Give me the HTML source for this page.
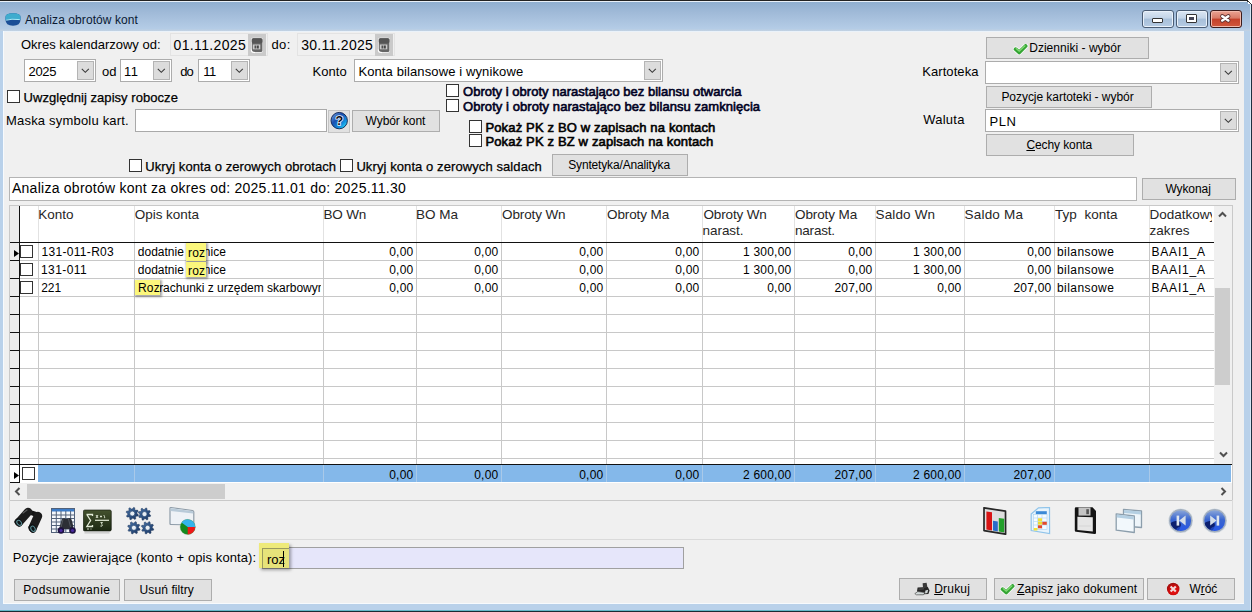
<!DOCTYPE html>
<html><head><meta charset="utf-8"><style>
*{box-sizing:border-box;margin:0;padding:0}
html,body{width:1252px;height:612px;overflow:hidden}
body{position:relative;background:#b9d1ea;font-family:"Liberation Sans",sans-serif;font-size:13px;color:#000}
.a{position:absolute}
.t{position:absolute;white-space:nowrap}
.btn{position:absolute;background:#e1e1e1;border:1px solid #adadad}
.combo{position:absolute;background:#fff;border:1px solid #acacac}
.dd{position:absolute;background:#dcdcdc;border:1px solid #b4b4b4}

.cb{position:absolute;width:13px;height:13px;border:1px solid #333;background:#fff}
.tb{position:absolute;width:32px;height:18px;border:1px solid #3c4f66;border-radius:3px}
.gl{position:absolute;background:#c8c8c8}
.hl{background:#f5f07a;box-shadow:2px 2px 2px rgba(0,0,0,0.3)}</style></head><body>
<div class="a" style="left:0px;top:0px;width:1252px;height:31px;background:linear-gradient(#8cadcf 0%,#a0bad8 40%,#b4cce6 92%,#c2d2e2 100%)"></div>
<div class="a" style="left:0px;top:0px;width:1252px;height:1px;background:#222"></div>
<div class="a" style="left:0px;top:1px;width:1250px;height:1px;background:#e8f0f8"></div>
<div class="a" style="left:1251px;top:0px;width:1px;height:612px;background:#222"></div>
<div class="a" style="left:0px;top:611px;width:1252px;height:1px;background:#1a2a33"></div>
<div class="a" style="left:0px;top:610px;width:1251px;height:1px;background:#62b7c8"></div>
<div class="a" style="left:1248px;top:0px;width:4px;height:4px;background:#fff"></div>
<div class="a" style="left:1247px;top:1px;width:1px;height:1px;background:#333"></div>
<div class="a" style="left:1248px;top:1px;width:1px;height:1px;background:#333"></div>
<div class="a" style="left:1249px;top:2px;width:1px;height:1px;background:#333"></div>
<div class="a" style="left:1250px;top:3px;width:1px;height:1px;background:#333"></div>
<div class="a" style="left:1251px;top:4px;width:1px;height:608px;background:#1f3040"></div>
<div class="a" style="left:1250px;top:4px;width:1px;height:606px;background:#d6e6f4"></div>
<div class="a" style="left:3px;top:31px;width:1241px;height:573px;background:#f0f0f0"></div>
<div class="a" style="left:3px;top:31px;width:1241px;height:1px;background:#eaf2fa"></div>
<div class="a" style="left:3px;top:31px;width:1px;height:573px;background:#f7fafd"></div>
<div class="a" style="left:3px;top:603px;width:1241px;height:1px;background:#f7fafd"></div>
<svg class="a" style="left:5px;top:13px" width="16" height="13" viewBox="0 0 16 13"><path d="M0.5 4 Q0.5 0.3 8 0.3 Q15.5 0.3 15.5 4 L15.5 6.5 Q15.5 12.7 8 12.7 Q0.5 12.7 0.5 6.5Z" fill="#1a4e97"/><path d="M0.5 4 Q0.5 0.3 8 0.3 Q15.5 0.3 15.5 4 L15.5 6.8 Q8 5.2 0.5 7.2Z" fill="#3facce"/><path d="M1.2 7.2 Q6 5.6 14.8 6.6" stroke="#a8ecf8" stroke-width="1" fill="none"/></svg>
<div class="t" id="T_title" style="left:25.00px;top:14px;font-size:12px;line-height:12px;letter-spacing:0.079px;color:#0a1a33;">Analiza obrotów kont</div>
<div class="a" style="left:1142px;top:10px;width:32px;height:18px;border:1px solid #4a5c74;border-radius:3px;background:linear-gradient(#dbe6f3 0%,#c3d4e8 45%,#a7bfd9 50%,#b6cce4 100%);box-shadow:inset 0 0 0 1px #e9f1fa"></div>
<div class="a" style="left:1176px;top:10px;width:32px;height:18px;border:1px solid #4a5c74;border-radius:3px;background:linear-gradient(#dbe6f3 0%,#c3d4e8 45%,#a7bfd9 50%,#b6cce4 100%);box-shadow:inset 0 0 0 1px #e9f1fa"></div>
<div class="a" style="left:1210px;top:10px;width:32px;height:18px;border:1px solid #3c1c1c;border-radius:3px;background:linear-gradient(#eaa393 0%,#d87a66 45%,#c4412a 50%,#d0573c 100%);box-shadow:inset 0 0 0 1px #f1b9ab"></div>
<div class="a" style="left:1152px;top:18px;width:11px;height:5px;background:#fff;border:1px solid #333;border-radius:1px"></div>
<div class="a" style="left:1186px;top:14px;width:11px;height:9px;background:#fff;border:1px solid #333;border-radius:1px"></div>
<div class="a" style="left:1189px;top:17px;width:5px;height:3px;background:#445;"></div>
<svg class="a" style="left:1218px;top:12px" width="16" height="14" viewBox="0 0 16 14"><path d="M4.3 4.3 L10.3 8.5 M10.3 4.3 L4.3 8.5" stroke="#5a3030" stroke-width="4.2" stroke-linecap="round"/><path d="M4.3 4.3 L10.3 8.5 M10.3 4.3 L4.3 8.5" stroke="#fff" stroke-width="2.6" stroke-linecap="round"/></svg>
<div class="t" id="T_okres" style="left:21.00px;top:38px;font-size:13px;line-height:13px;letter-spacing:0.005px;">Okres kalendarzowy od:</div>
<div class="a" style="left:170px;top:33px;width:98px;height:23px;background:#f0f0f0;border:1px solid #e3e3e3"></div>
<div class="t" id="T_date1" style="left:173.60px;top:38px;font-size:14px;line-height:14px;letter-spacing:0.352px;">01.11.2025</div>
<div class="a" style="left:248px;top:34px;width:18px;height:22px;background:#cacaca"></div>
<div class="t" id="T_doc" style="left:271.60px;top:38px;font-size:13px;line-height:13px;letter-spacing:0.300px;">do:</div>
<div class="a" style="left:297px;top:33px;width:98px;height:23px;background:#f0f0f0;border:1px solid #e3e3e3"></div>
<div class="t" id="T_date2" style="left:301.20px;top:38px;font-size:14px;line-height:14px;letter-spacing:0.293px;">30.11.2025</div>
<div class="a" style="left:375px;top:34px;width:18px;height:22px;background:#cacaca"></div>
<svg class="a" style="left:250px;top:37px" width="15" height="17" viewBox="0 0 15 17"><rect x="1" y="0.8" width="12" height="15" rx="2" fill="#f4f4f4"/><rect x="1.8" y="1.2" width="10.6" height="13.8" rx="1.5" fill="#666"/><rect x="1.8" y="1.2" width="10.6" height="5" rx="1.5" fill="#555"/><rect x="2.8" y="7.5" width="7.5" height="4.8" fill="#cacaca"/><rect x="4.6" y="8.5" width="1.2" height="3" fill="#333"/><rect x="6.6" y="8.5" width="2.2" height="3" fill="#444"/><path d="M1.2 12.5 Q1.5 15.5 5 15.6" stroke="#fff" stroke-width="1.2" fill="none"/></svg>
<svg class="a" style="left:377px;top:37px" width="15" height="17" viewBox="0 0 15 17"><rect x="1" y="0.8" width="12" height="15" rx="2" fill="#f4f4f4"/><rect x="1.8" y="1.2" width="10.6" height="13.8" rx="1.5" fill="#666"/><rect x="1.8" y="1.2" width="10.6" height="5" rx="1.5" fill="#555"/><rect x="2.8" y="7.5" width="7.5" height="4.8" fill="#cacaca"/><rect x="4.6" y="8.5" width="1.2" height="3" fill="#333"/><rect x="6.6" y="8.5" width="2.2" height="3" fill="#444"/><path d="M1.2 12.5 Q1.5 15.5 5 15.6" stroke="#fff" stroke-width="1.2" fill="none"/></svg>
<div class="combo" style="left:24px;top:59px;width:72px;height:23px;">
<div class="dd" style="left:52px;top:1px;width:17px;height:19px"><svg class="a" style="left:3px;top:6px" width="9" height="6"><path d="M0.8 0.8 L4.3 4.3 L7.8 0.8" stroke="#3a3a3a" stroke-width="1.1" fill="none"/></svg></div>
</div>
<div class="t" id="T_2025" style="left:28.50px;top:65px;font-size:13px;line-height:13px;letter-spacing:-0.333px;">2025</div>
<div class="t" id="T_od" style="left:102.00px;top:65px;font-size:13px;line-height:13px;">od</div>
<div class="combo" style="left:120px;top:59px;width:52px;height:23px;">
<div class="dd" style="left:32px;top:1px;width:17px;height:19px"><svg class="a" style="left:3px;top:6px" width="9" height="6"><path d="M0.8 0.8 L4.3 4.3 L7.8 0.8" stroke="#3a3a3a" stroke-width="1.1" fill="none"/></svg></div>
</div>
<div class="t" id="T_11a" style="left:124.00px;top:65px;font-size:13px;line-height:13px;letter-spacing:0.500px;">11</div>
<div class="t" id="T_do" style="left:180.20px;top:65px;font-size:13px;line-height:13px;letter-spacing:-1.000px;">do</div>
<div class="combo" style="left:198px;top:59px;width:52px;height:23px;">
<div class="dd" style="left:32px;top:1px;width:17px;height:19px"><svg class="a" style="left:3px;top:6px" width="9" height="6"><path d="M0.8 0.8 L4.3 4.3 L7.8 0.8" stroke="#3a3a3a" stroke-width="1.1" fill="none"/></svg></div>
</div>
<div class="t" id="T_11b" style="left:203.20px;top:65px;font-size:13px;line-height:13px;letter-spacing:-0.500px;">11</div>
<div class="t" id="T_konto" style="left:312.40px;top:65px;font-size:13px;line-height:13px;letter-spacing:0.100px;">Konto</div>
<div class="combo" style="left:354px;top:59px;width:309px;height:23px;">
<div class="dd" style="left:289px;top:1px;width:17px;height:19px"><svg class="a" style="left:3px;top:6px" width="9" height="6"><path d="M0.8 0.8 L4.3 4.3 L7.8 0.8" stroke="#3a3a3a" stroke-width="1.1" fill="none"/></svg></div>
</div>
<div class="t" id="T_kontabil" style="left:358.40px;top:65px;font-size:13px;line-height:13px;letter-spacing:0.116px;">Konta bilansowe i wynikowe</div>
<div class="cb" style="left:7px;top:90px"></div>
<div class="t" id="T_uwzgl" style="left:23.50px;top:91px;font-size:13px;line-height:13px;letter-spacing:0.050px;-webkit-text-stroke:0.25px #000;">Uwzględnij zapisy robocze</div>
<div class="t" id="T_maska" style="left:6.00px;top:114px;font-size:13px;line-height:13px;letter-spacing:0.194px;">Maska symbolu kart.</div>
<div class="a" style="left:135px;top:109px;width:192px;height:23px;background:#fff;border:1px solid #a9a9a9"></div>
<div class="a" style="left:328px;top:110px;width:22px;height:23px;background:#e1e1e1;border:1px solid #c4c4c4"></div>
<svg class="a" style="left:330px;top:111px" width="19" height="19" viewBox="0 0 19 19"><defs><linearGradient id="hg" x1="0.1" y1="0.1" x2="0.9" y2="0.9"><stop offset="0" stop-color="#6a9ad8"/><stop offset="0.35" stop-color="#1a4fb0"/><stop offset="0.75" stop-color="#1290e0"/><stop offset="1" stop-color="#30e0f8"/></linearGradient></defs><circle cx="9.2" cy="9.6" r="8.2" fill="url(#hg)" stroke="#0a1e50" stroke-width="0.9"/><text x="9.4" y="14" font-family="Liberation Sans" font-weight="bold" font-size="12.5" text-anchor="middle" fill="#0a0a14" stroke="#e8f0ff" stroke-width="1.6" paint-order="stroke">?</text></svg>
<div class="btn" style="left:352px;top:110px;width:88px;height:22px;">
</div>
<div class="t" id="T_wybor" style="left:365.60px;top:115px;font-size:12px;line-height:12px;letter-spacing:-0.093px;">Wybór kont</div>
<div class="cb" style="left:446px;top:84px"></div>
<div class="t" id="T_obroty1" style="left:463.00px;top:85px;font-size:13px;line-height:13px;letter-spacing:0.021px;-webkit-text-stroke:0.6px #000022;color:#000022;">Obroty i obroty narastająco bez bilansu otwarcia</div>
<div class="cb" style="left:446px;top:99px"></div>
<div class="t" id="T_obroty2" style="left:463.00px;top:100px;font-size:13px;line-height:13px;letter-spacing:0.061px;-webkit-text-stroke:0.6px #000022;color:#000022;">Obroty i obroty narastająco bez bilansu zamknięcia</div>
<div class="cb" style="left:469px;top:120px"></div>
<div class="t" id="T_pokaz1" style="left:485.40px;top:121px;font-size:13px;line-height:13px;letter-spacing:0.154px;-webkit-text-stroke:0.6px #000;">Pokaż PK z BO w zapisach na kontach</div>
<div class="cb" style="left:469px;top:134px"></div>
<div class="t" id="T_pokaz2" style="left:485.40px;top:135px;font-size:13px;line-height:13px;letter-spacing:0.154px;-webkit-text-stroke:0.6px #000;">Pokaż PK z BZ w zapisach na kontach</div>
<div class="btn" style="left:986px;top:37px;width:163px;height:22px;">
</div>
<svg class="a" style="left:1013px;top:44px" width="16" height="12" viewBox="0 0 16 12"><path d="M2.6 5.2 L6.2 8.4 L12.6 2" stroke="#fff" stroke-width="5.4" fill="none" stroke-linejoin="round" stroke-linecap="round" opacity="0.75"/><path d="M2.6 5.2 L6.2 8.4 L12.6 2" stroke="#34a534" stroke-width="3.8" fill="none" stroke-linejoin="round" stroke-linecap="round"/><path d="M3.2 4.6 L6.2 7.2 L12 1.8" stroke="#8ee27e" stroke-width="1.2" fill="none" stroke-linecap="round" opacity="0.9"/></svg>
<div class="t" id="T_dzien" style="left:1029.20px;top:42px;font-size:12px;line-height:12px;letter-spacing:0.029px;">Dzienniki - wybór</div>
<div class="t" id="T_kartoteka" style="left:922.20px;top:65px;font-size:13px;line-height:13px;letter-spacing:0.077px;">Kartoteka</div>
<div class="combo" style="left:985px;top:61px;width:254px;height:23px;">
<div class="dd" style="left:234px;top:1px;width:17px;height:19px"><svg class="a" style="left:3px;top:6px" width="9" height="6"><path d="M0.8 0.8 L4.3 4.3 L7.8 0.8" stroke="#3a3a3a" stroke-width="1.1" fill="none"/></svg></div>
</div>
<div class="btn" style="left:986px;top:86px;width:166px;height:22px;">
</div>
<div class="t" id="T_pozycje" style="left:1001.40px;top:91px;font-size:12px;line-height:12px;letter-spacing:-0.047px;">Pozycje kartoteki - wybór</div>
<div class="t" id="T_waluta" style="left:923.20px;top:113px;font-size:13px;line-height:13px;letter-spacing:0.260px;">Waluta</div>
<div class="combo" style="left:985px;top:109px;width:254px;height:23px;">
<div class="dd" style="left:234px;top:1px;width:17px;height:19px"><svg class="a" style="left:3px;top:6px" width="9" height="6"><path d="M0.8 0.8 L4.3 4.3 L7.8 0.8" stroke="#3a3a3a" stroke-width="1.1" fill="none"/></svg></div>
</div>
<div class="t" id="T_pln" style="left:989.40px;top:115px;font-size:13px;line-height:13px;letter-spacing:0.650px;">PLN</div>
<div class="btn" style="left:986px;top:134px;width:148px;height:22px;">
</div>
<div class="t" id="T_cechy" style="left:1026.40px;top:139px;font-size:12px;line-height:12px;letter-spacing:-0.090px;"><u>C</u>echy konta</div>
<div class="cb" style="left:129px;top:159px"></div>
<div class="t" id="T_ukryj1" style="left:145.20px;top:160px;font-size:13px;line-height:13px;letter-spacing:0.076px;-webkit-text-stroke:0.25px #000;">Ukryj konta o zerowych obrotach</div>
<div class="cb" style="left:340px;top:159px"></div>
<div class="t" id="T_ukryj2" style="left:356.40px;top:160px;font-size:13px;line-height:13px;letter-spacing:0.090px;-webkit-text-stroke:0.25px #000;">Ukryj konta o zerowych saldach</div>
<div class="btn" style="left:552px;top:154px;width:136px;height:22px;">
</div>
<div class="t" id="T_synt" style="left:568.20px;top:159px;font-size:12px;line-height:12px;letter-spacing:-0.155px;">Syntetyka/Analityka</div>
<div class="a" style="left:9px;top:177px;width:1128px;height:24px;background:#fff;border:1px solid #b4b4b4"></div>
<div class="t" id="T_analiza" style="left:12.00px;top:181px;font-size:14px;line-height:14px;letter-spacing:0.250px;">Analiza obrotów kont za okres od: 2025.11.01 do: 2025.11.30</div>
<div class="btn" style="left:1142px;top:178px;width:94px;height:22px;">
</div>
<div class="t" id="T_wykonaj" style="left:1165.40px;top:183px;font-size:12px;line-height:12px;letter-spacing:-0.081px;">Wykonaj</div>
<div class="a" style="left:9px;top:205px;width:1224px;height:296px;background:#fff;border:1px solid #c9c9c9"></div>
<div class="a" style="left:10px;top:206px;width:9px;height:258px;background:#ececec"></div>
<div class="a" style="left:38px;top:206px;width:1px;height:36px;background:#e2e2e2"></div>
<div class="a" style="left:134px;top:206px;width:1px;height:36px;background:#e2e2e2"></div>
<div class="a" style="left:323px;top:206px;width:1px;height:36px;background:#e2e2e2"></div>
<div class="a" style="left:416px;top:206px;width:1px;height:36px;background:#e2e2e2"></div>
<div class="a" style="left:501px;top:206px;width:1px;height:36px;background:#e2e2e2"></div>
<div class="a" style="left:606px;top:206px;width:1px;height:36px;background:#e2e2e2"></div>
<div class="a" style="left:702px;top:206px;width:1px;height:36px;background:#e2e2e2"></div>
<div class="a" style="left:794px;top:206px;width:1px;height:36px;background:#e2e2e2"></div>
<div class="a" style="left:875px;top:206px;width:1px;height:36px;background:#e2e2e2"></div>
<div class="a" style="left:964px;top:206px;width:1px;height:36px;background:#e2e2e2"></div>
<div class="a" style="left:1054px;top:206px;width:1px;height:36px;background:#e2e2e2"></div>
<div class="a" style="left:1149px;top:206px;width:1px;height:36px;background:#e2e2e2"></div>
<div class="a" style="left:10px;top:242px;width:1204px;height:1px;background:#111"></div>
<div class="a" style="left:20px;top:260px;width:1194px;height:1px;background:#c8c8c8"></div>
<div class="a" style="left:10px;top:260px;width:10px;height:1px;background:#111"></div>
<div class="a" style="left:20px;top:278px;width:1194px;height:1px;background:#c8c8c8"></div>
<div class="a" style="left:10px;top:278px;width:10px;height:1px;background:#111"></div>
<div class="a" style="left:20px;top:296px;width:1194px;height:1px;background:#c8c8c8"></div>
<div class="a" style="left:10px;top:296px;width:10px;height:1px;background:#111"></div>
<div class="a" style="left:20px;top:314px;width:1194px;height:1px;background:#c8c8c8"></div>
<div class="a" style="left:10px;top:314px;width:10px;height:1px;background:#111"></div>
<div class="a" style="left:20px;top:332px;width:1194px;height:1px;background:#c8c8c8"></div>
<div class="a" style="left:10px;top:332px;width:10px;height:1px;background:#111"></div>
<div class="a" style="left:20px;top:350px;width:1194px;height:1px;background:#c8c8c8"></div>
<div class="a" style="left:10px;top:350px;width:10px;height:1px;background:#111"></div>
<div class="a" style="left:20px;top:368px;width:1194px;height:1px;background:#c8c8c8"></div>
<div class="a" style="left:10px;top:368px;width:10px;height:1px;background:#111"></div>
<div class="a" style="left:20px;top:386px;width:1194px;height:1px;background:#c8c8c8"></div>
<div class="a" style="left:10px;top:386px;width:10px;height:1px;background:#111"></div>
<div class="a" style="left:20px;top:404px;width:1194px;height:1px;background:#c8c8c8"></div>
<div class="a" style="left:10px;top:404px;width:10px;height:1px;background:#111"></div>
<div class="a" style="left:20px;top:422px;width:1194px;height:1px;background:#c8c8c8"></div>
<div class="a" style="left:10px;top:422px;width:10px;height:1px;background:#111"></div>
<div class="a" style="left:20px;top:440px;width:1194px;height:1px;background:#c8c8c8"></div>
<div class="a" style="left:10px;top:440px;width:10px;height:1px;background:#111"></div>
<div class="a" style="left:20px;top:458px;width:1194px;height:1px;background:#c8c8c8"></div>
<div class="a" style="left:10px;top:458px;width:10px;height:1px;background:#111"></div>
<div class="a" style="left:38px;top:243px;width:1px;height:221px;background:#c8c8c8"></div>
<div class="a" style="left:134px;top:243px;width:1px;height:221px;background:#c8c8c8"></div>
<div class="a" style="left:323px;top:243px;width:1px;height:221px;background:#c8c8c8"></div>
<div class="a" style="left:416px;top:243px;width:1px;height:221px;background:#c8c8c8"></div>
<div class="a" style="left:501px;top:243px;width:1px;height:221px;background:#c8c8c8"></div>
<div class="a" style="left:606px;top:243px;width:1px;height:221px;background:#c8c8c8"></div>
<div class="a" style="left:702px;top:243px;width:1px;height:221px;background:#c8c8c8"></div>
<div class="a" style="left:794px;top:243px;width:1px;height:221px;background:#c8c8c8"></div>
<div class="a" style="left:875px;top:243px;width:1px;height:221px;background:#c8c8c8"></div>
<div class="a" style="left:964px;top:243px;width:1px;height:221px;background:#c8c8c8"></div>
<div class="a" style="left:1054px;top:243px;width:1px;height:221px;background:#c8c8c8"></div>
<div class="a" style="left:1149px;top:243px;width:1px;height:221px;background:#c8c8c8"></div>
<div class="a" style="left:19px;top:206px;width:1px;height:277px;background:#111"></div>
<div class="t" id="T_h_konto" style="left:38.20px;top:208px;font-size:13.5px;line-height:13.5px;letter-spacing:0.025px;color:#262626;">Konto</div>
<div class="t" id="T_h_opis" style="left:134.80px;top:208px;font-size:13.5px;line-height:13.5px;letter-spacing:-0.037px;color:#262626;">Opis konta</div>
<div class="t" id="T_h_bown" style="left:323.50px;top:208px;font-size:13.5px;line-height:13.5px;letter-spacing:-0.197px;color:#262626;">BO Wn</div>
<div class="t" id="T_h_boma" style="left:416.00px;top:208px;font-size:13.5px;line-height:13.5px;color:#262626;">BO Ma</div>
<div class="t" id="T_h_obwn" style="left:502.00px;top:208px;font-size:13.5px;line-height:13.5px;letter-spacing:-0.125px;color:#262626;">Obroty Wn</div>
<div class="t" id="T_h_obma" style="left:607.00px;top:208px;font-size:13.5px;line-height:13.5px;letter-spacing:-0.099px;color:#262626;">Obroty Ma</div>
<div class="t" id="T_h_obwn2" style="left:703.50px;top:208px;font-size:13.5px;line-height:13.5px;letter-spacing:-0.151px;color:#262626;">Obroty Wn</div>
<div class="t" id="T_h_obma2" style="left:795.00px;top:208px;font-size:13.5px;line-height:13.5px;letter-spacing:-0.099px;color:#262626;">Obroty Ma</div>
<div class="t" id="T_h_sawn" style="left:875.50px;top:208px;font-size:13.5px;line-height:13.5px;letter-spacing:0.147px;color:#262626;">Saldo Wn</div>
<div class="t" id="T_h_sama" style="left:964.40px;top:208px;font-size:13.5px;line-height:13.5px;letter-spacing:0.241px;color:#262626;">Saldo Ma</div>
<div class="t" id="T_h_typ" style="left:1055.00px;top:208px;font-size:13.5px;line-height:13.5px;letter-spacing:0.037px;color:#262626;">Typ&nbsp; konta</div>
<div class="t" id="T_h_dod" style="left:1149.40px;top:208px;font-size:13.5px;line-height:13.5px;color:#262626;overflow:hidden;width:63px;">Dodatkowy</div>
<div class="t" id="T_h_nar1" style="left:702.50px;top:224px;font-size:13.5px;line-height:13.5px;letter-spacing:-0.043px;color:#262626;">narast.</div>
<div class="t" id="T_h_nar2" style="left:795.00px;top:224px;font-size:13.5px;line-height:13.5px;letter-spacing:-0.209px;color:#262626;">narast.</div>
<div class="t" id="T_h_zak" style="left:1149.40px;top:224px;font-size:13.5px;line-height:13.5px;letter-spacing:0.080px;color:#262626;">zakres</div>
<div class="cb" style="left:20px;top:245px"></div>
<div class="t" id="T_g0_0" style="left:41.60px;top:246px;font-size:12px;line-height:12px;letter-spacing:0.300px;width:90.9px;height:15px;overflow:hidden;">131-011-R03</div>
<div class="t" id="T_g0_1" style="left:137.80px;top:246px;font-size:12px;line-height:12px;letter-spacing:-0.003px;width:184.2px;height:15px;overflow:hidden;">dodatnie roznice</div>
<div class="t" style="left:324px;top:246px;width:89.4px;text-align:right;font-size:12px;line-height:12px;letter-spacing:0.2px">0,00</div>
<div class="t" style="left:417px;top:246px;width:81.4px;text-align:right;font-size:12px;line-height:12px;letter-spacing:0.2px">0,00</div>
<div class="t" style="left:502px;top:246px;width:101.4px;text-align:right;font-size:12px;line-height:12px;letter-spacing:0.2px">0,00</div>
<div class="t" style="left:607px;top:246px;width:92.4px;text-align:right;font-size:12px;line-height:12px;letter-spacing:0.2px">0,00</div>
<div class="t" style="left:703px;top:246px;width:88.4px;text-align:right;font-size:12px;line-height:12px;letter-spacing:0.2px">1 300,00</div>
<div class="t" style="left:795px;top:246px;width:77.4px;text-align:right;font-size:12px;line-height:12px;letter-spacing:0.2px">0,00</div>
<div class="t" style="left:876px;top:246px;width:85.4px;text-align:right;font-size:12px;line-height:12px;letter-spacing:0.2px">1 300,00</div>
<div class="t" style="left:965px;top:246px;width:86.4px;text-align:right;font-size:12px;line-height:12px;letter-spacing:0.2px">0,00</div>
<div class="t" id="T_g0_10" style="left:1057.00px;top:246px;font-size:12px;line-height:12px;letter-spacing:0.430px;width:90.0px;height:15px;overflow:hidden;">bilansowe</div>
<div class="t" id="T_g0_11" style="left:1151.40px;top:246px;font-size:12px;line-height:12px;letter-spacing:0.833px;width:60.6px;height:15px;overflow:hidden;">BAAI1_A</div>
<div class="cb" style="left:20px;top:263px"></div>
<div class="t" id="T_g1_0" style="left:41.00px;top:264px;font-size:12px;line-height:12px;letter-spacing:0.415px;width:91.0px;height:15px;overflow:hidden;">131-011</div>
<div class="t" id="T_g1_1" style="left:137.80px;top:264px;font-size:12px;line-height:12px;letter-spacing:-0.003px;width:184.2px;height:15px;overflow:hidden;">dodatnie roznice</div>
<div class="t" style="left:324px;top:264px;width:89.4px;text-align:right;font-size:12px;line-height:12px;letter-spacing:0.2px">0,00</div>
<div class="t" style="left:417px;top:264px;width:81.4px;text-align:right;font-size:12px;line-height:12px;letter-spacing:0.2px">0,00</div>
<div class="t" style="left:502px;top:264px;width:101.4px;text-align:right;font-size:12px;line-height:12px;letter-spacing:0.2px">0,00</div>
<div class="t" style="left:607px;top:264px;width:92.4px;text-align:right;font-size:12px;line-height:12px;letter-spacing:0.2px">0,00</div>
<div class="t" style="left:703px;top:264px;width:88.4px;text-align:right;font-size:12px;line-height:12px;letter-spacing:0.2px">1 300,00</div>
<div class="t" style="left:795px;top:264px;width:77.4px;text-align:right;font-size:12px;line-height:12px;letter-spacing:0.2px">0,00</div>
<div class="t" style="left:876px;top:264px;width:85.4px;text-align:right;font-size:12px;line-height:12px;letter-spacing:0.2px">1 300,00</div>
<div class="t" style="left:965px;top:264px;width:86.4px;text-align:right;font-size:12px;line-height:12px;letter-spacing:0.2px">0,00</div>
<div class="t" id="T_g1_10" style="left:1057.00px;top:264px;font-size:12px;line-height:12px;letter-spacing:0.430px;width:90.0px;height:15px;overflow:hidden;">bilansowe</div>
<div class="t" id="T_g1_11" style="left:1151.40px;top:264px;font-size:12px;line-height:12px;letter-spacing:0.833px;width:60.6px;height:15px;overflow:hidden;">BAAI1_A</div>
<div class="cb" style="left:20px;top:281px"></div>
<div class="t" id="T_g2_0" style="left:41.20px;top:282px;font-size:12px;line-height:12px;width:91.3px;height:15px;overflow:hidden;">221</div>
<div class="t" id="T_g2_1" style="left:137.80px;top:282px;font-size:12px;line-height:12px;letter-spacing:-0.003px;width:183.2px;height:15px;overflow:hidden;">Rozrachunki z urzędem skarbowym</div>
<div class="t" style="left:324px;top:282px;width:89.4px;text-align:right;font-size:12px;line-height:12px;letter-spacing:0.2px">0,00</div>
<div class="t" style="left:417px;top:282px;width:81.4px;text-align:right;font-size:12px;line-height:12px;letter-spacing:0.2px">0,00</div>
<div class="t" style="left:502px;top:282px;width:101.4px;text-align:right;font-size:12px;line-height:12px;letter-spacing:0.2px">0,00</div>
<div class="t" style="left:607px;top:282px;width:92.4px;text-align:right;font-size:12px;line-height:12px;letter-spacing:0.2px">0,00</div>
<div class="t" style="left:703px;top:282px;width:88.4px;text-align:right;font-size:12px;line-height:12px;letter-spacing:0.2px">0,00</div>
<div class="t" style="left:795px;top:282px;width:77.4px;text-align:right;font-size:12px;line-height:12px;letter-spacing:0.2px">207,00</div>
<div class="t" style="left:876px;top:282px;width:85.4px;text-align:right;font-size:12px;line-height:12px;letter-spacing:0.2px">0,00</div>
<div class="t" style="left:965px;top:282px;width:86.4px;text-align:right;font-size:12px;line-height:12px;letter-spacing:0.2px">207,00</div>
<div class="t" id="T_g2_10" style="left:1057.00px;top:282px;font-size:12px;line-height:12px;letter-spacing:0.430px;width:90.0px;height:15px;overflow:hidden;">bilansowe</div>
<div class="t" id="T_g2_11" style="left:1151.40px;top:282px;font-size:12px;line-height:12px;letter-spacing:0.833px;width:60.6px;height:15px;overflow:hidden;">BAAI1_A</div>
<div class="a" style="left:186px;top:243px;width:20px;height:18px;background:#fbf77c;box-shadow:1px 1px 2px 1px rgba(0,0,0,0.35);overflow:hidden"><div class="t" style="left:2px;top:4px;font-size:12px;line-height:12px;letter-spacing:0.2px">roz</div></div>
<div class="a" style="left:186px;top:262px;width:20px;height:15px;background:#fbf77c;box-shadow:1px 1px 2px 1px rgba(0,0,0,0.35);overflow:hidden"><div class="t" style="left:2px;top:3px;font-size:12px;line-height:12px;letter-spacing:0.2px">roz</div></div>
<div class="a" style="left:135px;top:280px;width:25px;height:15px;background:#fbf77c;box-shadow:1px 1px 2px 1px rgba(0,0,0,0.35);overflow:hidden"><div class="t" style="left:3px;top:2px;font-size:12px;line-height:12px;letter-spacing:0.2px">Roz</div></div>
<svg class="a" style="left:14px;top:250px" width="5" height="7"><path d="M0 0 L5 3.5 L0 7Z" fill="#000"/></svg>
<div class="a" style="left:10px;top:464px;width:1222px;height:1px;background:#111"></div>
<div class="a" style="left:38px;top:465px;width:1193px;height:17px;background:#84b8ea"></div>
<div class="a" style="left:10px;top:465px;width:9px;height:17px;background:#fff"></div>
<div class="a" style="left:20px;top:465px;width:18px;height:17px;background:#fff"></div>
<div class="a" style="left:10px;top:482px;width:10px;height:1px;background:#111"></div>
<div class="a" style="left:134px;top:465px;width:1px;height:17px;background:#a9c9e9"></div>
<div class="a" style="left:323px;top:465px;width:1px;height:17px;background:#a9c9e9"></div>
<div class="a" style="left:416px;top:465px;width:1px;height:17px;background:#a9c9e9"></div>
<div class="a" style="left:501px;top:465px;width:1px;height:17px;background:#a9c9e9"></div>
<div class="a" style="left:606px;top:465px;width:1px;height:17px;background:#a9c9e9"></div>
<div class="a" style="left:702px;top:465px;width:1px;height:17px;background:#a9c9e9"></div>
<div class="a" style="left:794px;top:465px;width:1px;height:17px;background:#a9c9e9"></div>
<div class="a" style="left:875px;top:465px;width:1px;height:17px;background:#a9c9e9"></div>
<div class="a" style="left:964px;top:465px;width:1px;height:17px;background:#a9c9e9"></div>
<div class="a" style="left:1054px;top:465px;width:1px;height:17px;background:#a9c9e9"></div>
<div class="a" style="left:1149px;top:465px;width:1px;height:17px;background:#a9c9e9"></div>
<div class="cb" style="left:22px;top:467px"></div>
<svg class="a" style="left:14px;top:472px" width="5" height="7"><path d="M0 0 L5 3.5 L0 7Z" fill="#000"/></svg>
<div class="t" style="left:324px;top:469px;width:89.4px;text-align:right;font-size:12px;line-height:12px;letter-spacing:0.2px">0,00</div>
<div class="t" style="left:417px;top:469px;width:81.4px;text-align:right;font-size:12px;line-height:12px;letter-spacing:0.2px">0,00</div>
<div class="t" style="left:502px;top:469px;width:101.4px;text-align:right;font-size:12px;line-height:12px;letter-spacing:0.2px">0,00</div>
<div class="t" style="left:607px;top:469px;width:92.4px;text-align:right;font-size:12px;line-height:12px;letter-spacing:0.2px">0,00</div>
<div class="t" style="left:703px;top:469px;width:88.4px;text-align:right;font-size:12px;line-height:12px;letter-spacing:0.2px">2 600,00</div>
<div class="t" style="left:795px;top:469px;width:77.4px;text-align:right;font-size:12px;line-height:12px;letter-spacing:0.2px">207,00</div>
<div class="t" style="left:876px;top:469px;width:85.4px;text-align:right;font-size:12px;line-height:12px;letter-spacing:0.2px">2 600,00</div>
<div class="t" style="left:965px;top:469px;width:86.4px;text-align:right;font-size:12px;line-height:12px;letter-spacing:0.2px">207,00</div>
<div class="a" style="left:1214px;top:206px;width:18px;height:258px;background:#f0f0f0"></div>
<div class="a" style="left:1215px;top:288px;width:15px;height:97px;background:#cdcdcd"></div>
<svg class="a" style="left:1218px;top:211px" width="9" height="7"><path d="M1 5.5 L4.5 2 L8 5.5" stroke="#505050" stroke-width="2" fill="none"/></svg>
<svg class="a" style="left:1219px;top:451px" width="9" height="7"><path d="M1 1.5 L4.5 5 L8 1.5" stroke="#505050" stroke-width="2" fill="none"/></svg>
<div class="a" style="left:10px;top:483px;width:1222px;height:17px;background:#f0f0f0"></div>
<div class="a" style="left:27px;top:484px;width:198px;height:15px;background:#cdcdcd"></div>
<svg class="a" style="left:14px;top:487px" width="7" height="9"><path d="M5.5 1 L2 4.5 L5.5 8" stroke="#505050" stroke-width="2" fill="none"/></svg>
<svg class="a" style="left:1220px;top:487px" width="7" height="9"><path d="M1.5 1 L5 4.5 L1.5 8" stroke="#505050" stroke-width="2" fill="none"/></svg>
<div class="a" style="left:9px;top:500px;width:1224px;height:40px;border:1px solid #dadada;border-top:none"></div>
<svg class="a" style="left:12px;top:505px" width="34" height="30" viewBox="0 0 34 30"><path d="M17 7 L26 10" stroke="#151515" stroke-width="5" stroke-linecap="round"/><path d="M8 16 L16 7" stroke="#1c1c1c" stroke-width="8.5" stroke-linecap="round"/><path d="M21 22 L26 11" stroke="#1c1c1c" stroke-width="8.5" stroke-linecap="round"/><path d="M11 8 L15 5" stroke="#5a5a5a" stroke-width="1.2" stroke-linecap="round"/><ellipse cx="6.6" cy="17.5" rx="3.4" ry="4.2" transform="rotate(-42 6.6 17.5)" fill="#0d1518" stroke="#101010" stroke-width="0.8"/><ellipse cx="7.2" cy="17.8" rx="2" ry="2.8" transform="rotate(-42 7.2 17.8)" fill="none" stroke="#5c8f96" stroke-width="1"/><ellipse cx="20.4" cy="23.5" rx="3.4" ry="4.2" transform="rotate(-30 20.4 23.5)" fill="#0d1518" stroke="#101010" stroke-width="0.8"/><ellipse cx="21" cy="23.8" rx="2" ry="2.8" transform="rotate(-30 21 23.8)" fill="none" stroke="#5c8f96" stroke-width="1"/></svg>
<svg class="a" style="left:50px;top:507px" width="26" height="28" viewBox="0 0 26 28"><rect x="1" y="1" width="24" height="25" fill="#f4f8fc"/><rect x="1" y="1" width="24" height="3.5" fill="#3c7cc8"/><path d="M1 1.5H25M1 8H25M1 11.5H25M1 15H25M1 18.5H25M1 22H25M1 25.5H25M1.5 1V26M6.3 4V26M11 4V26M15.8 4V26M20.6 4V26M24.5 1V26" stroke="#52627a" stroke-width="1"/><path d="M9 22 L12 12 Q14 10.5 16 12 L20 11 Q22.5 12 23.5 22Z" fill="#2c2f36"/><path d="M13 12.5 L11 20 M18.5 12 L20.5 20" stroke="#5a6068" stroke-width="0.8"/><circle cx="11" cy="23.5" r="3.3" fill="#1d1240"/><circle cx="11" cy="23.5" r="1.6" fill="#4a2aa0"/><circle cx="22.5" cy="23.5" r="3.3" fill="#1d1240"/><circle cx="22.5" cy="23.5" r="1.6" fill="#4a2aa0"/></svg>
<svg class="a" style="left:83px;top:509px" width="29" height="25" viewBox="0 0 29 25"><defs><linearGradient id="sgb" x1="0" y1="0" x2="0" y2="1"><stop offset="0" stop-color="#44522e"/><stop offset="1" stop-color="#1c2812"/></linearGradient></defs><rect x="0.3" y="1" width="28" height="21" rx="1.5" fill="url(#sgb)" stroke="#0e140a" stroke-width="0.6"/><path d="M3.5 5.5 H9.5 L9.5 7 M3.8 5.5 L7.6 11.5 L3.8 17.5 H9.5 V16" stroke="#e4ecd8" stroke-width="1.3" fill="none"/><path d="M12 11.3 H26" stroke="#e4ecd8" stroke-width="1.2"/><path d="M13 6 L15 9 M15 6 L13 9 M17 7.5 H19 M18 6.5 V8.5 M21.5 6 Q20.5 6.5 21.5 7.5 Q22.5 8.5 21 9" stroke="#e4ecd8" stroke-width="0.9" fill="none"/><path d="M17.5 13.5 H19.5 L18.3 15 Q20 15.5 19 17 Q18 17.6 17.4 17" stroke="#e4ecd8" stroke-width="0.9" fill="none"/><path d="M4 20 H6 M8 19.5 V20.5" stroke="#e4ecd8" stroke-width="0.9"/><rect x="1.5" y="23" width="25" height="1.6" fill="#cfcfcf"/></svg>
<svg class="a" style="left:125px;top:506px" width="31" height="30" viewBox="0 -1 31 30"><defs><linearGradient id="gg" x1="0" y1="0" x2="1" y2="1"><stop offset="0" stop-color="#4a74a8"/><stop offset="0.6" stop-color="#2a4c7c"/><stop offset="1" stop-color="#1c3660"/></linearGradient></defs><polygon points="13.47,7.85 13.11,9.03 11.17,9.20 10.58,9.91 10.78,11.85 9.69,12.43 8.19,11.18 7.28,11.26 6.05,12.77 4.87,12.41 4.70,10.47 3.99,9.88 2.05,10.08 1.47,8.99 2.72,7.49 2.64,6.58 1.13,5.35 1.49,4.17 3.43,4.00 4.02,3.29 3.82,1.35 4.91,0.77 6.41,2.02 7.32,1.94 8.55,0.43 9.73,0.79 9.90,2.73 10.61,3.32 12.55,3.12 13.13,4.21 11.88,5.71 11.96,6.62" fill="url(#gg)" stroke="#1e3658" stroke-width="0.5"/><circle cx="7.3" cy="6.6" r="2.52" fill="#e8eef4" stroke="#2a4a72" stroke-width="0.7"/><polygon points="25.67,8.35 25.31,9.53 23.37,9.70 22.78,10.41 22.98,12.35 21.89,12.93 20.39,11.68 19.48,11.76 18.25,13.27 17.07,12.91 16.90,10.97 16.19,10.38 14.25,10.58 13.67,9.49 14.92,7.99 14.84,7.08 13.33,5.85 13.69,4.67 15.63,4.50 16.22,3.79 16.02,1.85 17.11,1.27 18.61,2.52 19.52,2.44 20.75,0.93 21.93,1.29 22.10,3.23 22.81,3.82 24.75,3.62 25.33,4.71 24.08,6.21 24.16,7.12" fill="url(#gg)" stroke="#1e3658" stroke-width="0.5"/><circle cx="19.5" cy="7.1" r="2.52" fill="#e8eef4" stroke="#2a4a72" stroke-width="0.7"/><polygon points="15.07,22.05 14.71,23.23 12.77,23.40 12.18,24.11 12.38,26.05 11.29,26.63 9.79,25.38 8.88,25.46 7.65,26.97 6.47,26.61 6.30,24.67 5.59,24.08 3.65,24.28 3.07,23.19 4.32,21.69 4.24,20.78 2.73,19.55 3.09,18.37 5.03,18.20 5.62,17.49 5.42,15.55 6.51,14.97 8.01,16.22 8.92,16.14 10.15,14.63 11.33,14.99 11.50,16.93 12.21,17.52 14.15,17.32 14.73,18.41 13.48,19.91 13.56,20.82" fill="url(#gg)" stroke="#1e3658" stroke-width="0.5"/><circle cx="8.9" cy="20.8" r="2.52" fill="#e8eef4" stroke="#2a4a72" stroke-width="0.7"/><polygon points="28.77,22.05 28.41,23.23 26.47,23.40 25.88,24.11 26.08,26.05 24.99,26.63 23.49,25.38 22.58,25.46 21.35,26.97 20.17,26.61 20.00,24.67 19.29,24.08 17.35,24.28 16.77,23.19 18.02,21.69 17.94,20.78 16.43,19.55 16.79,18.37 18.73,18.20 19.32,17.49 19.12,15.55 20.21,14.97 21.71,16.22 22.62,16.14 23.85,14.63 25.03,14.99 25.20,16.93 25.91,17.52 27.85,17.32 28.43,18.41 27.18,19.91 27.26,20.82" fill="url(#gg)" stroke="#1e3658" stroke-width="0.5"/><circle cx="22.6" cy="20.8" r="2.52" fill="#e8eef4" stroke="#2a4a72" stroke-width="0.7"/></svg>
<svg class="a" style="left:169px;top:506px" width="28" height="30" viewBox="0 0 28 30"><path d="M2 1.5 L23.5 4.5 Q24.8 4.8 24.8 6 L24.8 19 L2 18.5 Q1 18.5 1 17.5 L1 2.5 Q1 1.4 2 1.5Z" fill="#eef2f6" stroke="#8e9ca8" stroke-width="1.2"/><path d="M1.6 2.2 L24.2 5.2 L24.2 7.6 L1.6 5Z" fill="#b8cad8"/><circle cx="18.7" cy="21" r="7.6" fill="#148a1e"/><path d="M18.7 21 L12.5 16.6 A7.6 7.6 0 0 1 26.3 21Z" fill="#34b4ec"/><path d="M18.7 21 L26.3 21 A7.6 7.6 0 0 1 18.7 28.6Z" fill="#f01818"/><circle cx="18.7" cy="21" r="7.6" fill="none" stroke="#6a9a6a" stroke-width="0.5" opacity="0.6"/></svg>
<svg class="a" style="left:983px;top:507px" width="24" height="28" viewBox="0 0 24 28"><path d="M1 0.8 L22.5 4.2 L22.6 27.2 L1 23.6Z" fill="#dedede"/><path d="M3.4 4.4 L9 5.2 L9 23.4 L3.4 22.6Z" fill="#d81414"/><path d="M10 13.8 L14.8 14.5 L14.8 24.5 L10 23.6Z" fill="#2a6cc8"/><path d="M15.8 11 L21.2 11.8 L21.2 25.4 L15.8 24.6Z" fill="#22a02a"/><path d="M1 0.8 L22.5 4.2 L22.6 27.2 L1 23.6Z" fill="none" stroke="#262626" stroke-width="1.7" stroke-linejoin="round"/></svg>
<svg class="a" style="left:1030px;top:507px" width="21" height="28" viewBox="0 0 21 28"><path d="M1.2 7 L8.5 0.8 L19.5 0.5 L19.6 26.5 L1.2 23.6 Z" fill="#e8f4fc" stroke="#90c4ea" stroke-width="1.2"/><rect x="5.8" y="4.2" width="11" height="3" fill="#3c8ad6"/><rect x="3.5" y="7.5" width="13.5" height="15" fill="#f6fbff" stroke="#a8d0ee" stroke-width="0.6"/><path d="M3.5 11H17M3.5 14.5H17M3.5 18H17M7.5 7.5V22.5M12 7.5V22.5" stroke="#b8d8f0" stroke-width="0.7"/><rect x="8" y="11.3" width="4" height="3" fill="#f2e23a"/><rect x="8" y="14.8" width="4" height="2.8" fill="#eedc30"/><rect x="12.3" y="14.8" width="4.5" height="3" fill="#e24a2a"/><rect x="8" y="18.3" width="4" height="3" fill="#e24a2a"/><rect x="3.8" y="21" width="3.6" height="2.5" fill="#f2e23a"/></svg>
<svg class="a" style="left:1074px;top:507px" width="23" height="28" viewBox="0 0 23 28"><path d="M2 0.3 H18.5 L22 4 V26 Q22 27.3 20.5 27 L2 24.8 Q0.8 24.6 0.8 23.4 V1.5 Q0.8 0.3 2 0.3Z" fill="#141414"/><path d="M4.5 0.5 H16.5 V8.6 H4.5Z" fill="#c4c4c4"/><rect x="12.3" y="2.2" width="2.6" height="5" fill="#555"/><path d="M3.4 9.8 L18.8 10.3 L18.8 24.6 L3.4 23Z" fill="#e6e6e6"/><path d="M5 19 H17" stroke="#cfcfcf" stroke-width="0.6"/></svg>
<svg class="a" style="left:1115px;top:508px" width="29" height="26" viewBox="0 0 29 26"><path d="M8.5 1.3 L26.5 3 L26.5 19.5 L8.5 18Z" fill="#eef5fa" stroke="#8c9eac" stroke-width="1.3" stroke-linejoin="round"/><path d="M9 2 L26 3.6 L26 6.5 L9 5Z" fill="#b4cfe2"/><path d="M1.2 5.8 L19.3 8 L19.3 24.5 L1.2 22.2Z" fill="#f2f8fc" stroke="#8c9eac" stroke-width="1.3" stroke-linejoin="round"/><path d="M1.8 6.5 L18.8 8.6 L18.8 11.5 L1.8 9.5Z" fill="#b4cfe2"/></svg>
<svg class="a" style="left:1168px;top:508px" width="26" height="26" viewBox="0 0 26 26"><defs><linearGradient id="ng1" x1="0" y1="0" x2="0" y2="1"><stop offset="0" stop-color="#8aa6d8"/><stop offset="0.45" stop-color="#3a66d0"/><stop offset="1" stop-color="#2a58e0"/></linearGradient><clipPath id="nc1"><circle cx="12.7" cy="12.7" r="10.4"/></clipPath></defs><circle cx="12.7" cy="12.7" r="12.3" fill="#a4b0bf" stroke="#f4f6f8" stroke-width="0.6"/><circle cx="12.7" cy="12.7" r="10.4" fill="url(#ng1)"/><g clip-path="url(#nc1)"><ellipse cx="5" cy="20" rx="9" ry="5.5" transform="rotate(-38 5 20)" fill="#0c1f6e"/><ellipse cx="16" cy="22" rx="8" ry="4" fill="#2a5ae6" opacity="0.6"/></g><rect x="8.6" y="7.6" width="2.6" height="10" fill="#dfe6ee"/><path d="M17.6 7.6 L11.2 12.6 L17.6 17.6Z" fill="#d4dde8"/></svg>
<svg class="a" style="left:1202px;top:508px" width="26" height="26" viewBox="0 0 26 26"><defs><linearGradient id="ng2" x1="0" y1="0" x2="0" y2="1"><stop offset="0" stop-color="#8aa6d8"/><stop offset="0.45" stop-color="#3a66d0"/><stop offset="1" stop-color="#2a58e0"/></linearGradient><clipPath id="nc2"><circle cx="12.7" cy="12.7" r="10.4"/></clipPath></defs><circle cx="12.7" cy="12.7" r="12.3" fill="#a4b0bf" stroke="#f4f6f8" stroke-width="0.6"/><circle cx="12.7" cy="12.7" r="10.4" fill="url(#ng2)"/><g clip-path="url(#nc2)"><ellipse cx="5" cy="20" rx="9" ry="5.5" transform="rotate(-38 5 20)" fill="#0c1f6e"/><ellipse cx="16" cy="22" rx="8" ry="4" fill="#2a5ae6" opacity="0.6"/></g><rect x="14.6" y="7.6" width="2.6" height="10" fill="#dfe6ee"/><path d="M8.2 7.6 L14.6 12.6 L8.2 17.6Z" fill="#d4dde8"/></svg>
<div class="t" id="T_pozfilter" style="left:12.80px;top:551px;font-size:13px;line-height:13px;letter-spacing:0.095px;">Pozycje zawierające (konto + opis konta):</div>
<div class="a" style="left:262px;top:547px;width:422px;height:22px;background:#e6e6fa;border:1px solid #a0a0a0"></div>
<div class="a" style="left:259px;top:543px;width:30px;height:25px;background:#eeea7a;box-shadow:2px 2px 3px rgba(0,0,0,0.35)"></div>
<div class="a" style="left:262px;top:548px;width:27px;height:20px;background:#e6e37a;border-left:1px solid #9a9a60;border-top:1px solid #9a9a60"></div>
<div class="t" style="left:267px;top:553px;font-size:13px;line-height:13px;">roz</div>
<div class="a" style="left:283px;top:551px;width:1px;height:16px;background:#000"></div>
<div class="btn" style="left:14px;top:579px;width:106px;height:22px;">
</div>
<div class="t" id="T_podsum" style="left:23.20px;top:584px;font-size:12px;line-height:12px;letter-spacing:0.426px;">Podsumowanie</div>
<div class="btn" style="left:124px;top:579px;width:88px;height:22px;">
</div>
<div class="t" id="T_usun" style="left:139.60px;top:584px;font-size:12px;line-height:12px;letter-spacing:0.090px;">Usuń filtry</div>
<div class="btn" style="left:899px;top:578px;width:88px;height:22px;">
</div>
<svg class="a" style="left:914px;top:582px" width="17" height="14" viewBox="0 0 17 14"><path d="M8.6 1.2 L12.6 0.8 L13.4 5 L9 5.4Z" fill="#3a3a3a"/><path d="M3.6 5.6 L13.8 5 L15.6 8.6 L14.4 12 L6 12.4 L3 9.2Z" fill="#262626"/><path d="M4.5 7.2 L10 6.8" stroke="#666" stroke-width="0.7"/><path d="M0.8 11.6 L3.8 9.6 L11 10.6 L9.4 12.8 L2.4 12.8Z" fill="#d4dcdc" stroke="#3a3a3a" stroke-width="0.6"/><path d="M11.4 8.6 L14.2 7.8 L13.4 11 L11 11.4Z" fill="#cfd6d6"/></svg>
<div class="t" id="T_drukuj" style="left:934.20px;top:583px;font-size:12px;line-height:12px;letter-spacing:0.200px;"><u>D</u>rukuj</div>
<div class="btn" style="left:994px;top:578px;width:150px;height:22px;">
</div>
<svg class="a" style="left:1000px;top:584px" width="16" height="12" viewBox="0 0 16 12"><path d="M2.6 5.2 L6.2 8.4 L12.6 2" stroke="#fff" stroke-width="5.4" fill="none" stroke-linejoin="round" stroke-linecap="round" opacity="0.75"/><path d="M2.6 5.2 L6.2 8.4 L12.6 2" stroke="#34a534" stroke-width="3.8" fill="none" stroke-linejoin="round" stroke-linecap="round"/><path d="M3.2 4.6 L6.2 7.2 L12 1.8" stroke="#8ee27e" stroke-width="1.2" fill="none" stroke-linecap="round" opacity="0.9"/></svg>
<div class="t" id="T_zapisz" style="left:1017.00px;top:583px;font-size:12px;line-height:12px;letter-spacing:0.175px;"><u>Z</u>apisz jako dokument</div>
<div class="btn" style="left:1147px;top:578px;width:88px;height:22px;">
</div>
<svg class="a" style="left:1165px;top:581px" width="16" height="16" viewBox="0 0 16 16"><defs><radialGradient id="rg" cx="0.55" cy="0.65" r="0.6"><stop offset="0" stop-color="#f01414"/><stop offset="0.7" stop-color="#c80c0c"/><stop offset="1" stop-color="#a01010"/></radialGradient></defs><circle cx="8.2" cy="8" r="6.8" fill="#fff" opacity="0.6"/><circle cx="8.2" cy="8" r="6.3" fill="url(#rg)"/><path d="M5.6 5.4 L10.8 10.6 M10.8 5.4 L5.6 10.6" stroke="#f2d8d8" stroke-width="2.1"/></svg>
<div class="t" id="T_wroc" style="left:1189.60px;top:583px;font-size:12px;line-height:12px;letter-spacing:-0.029px;">W<u>r</u>óć</div>
</body></html>
